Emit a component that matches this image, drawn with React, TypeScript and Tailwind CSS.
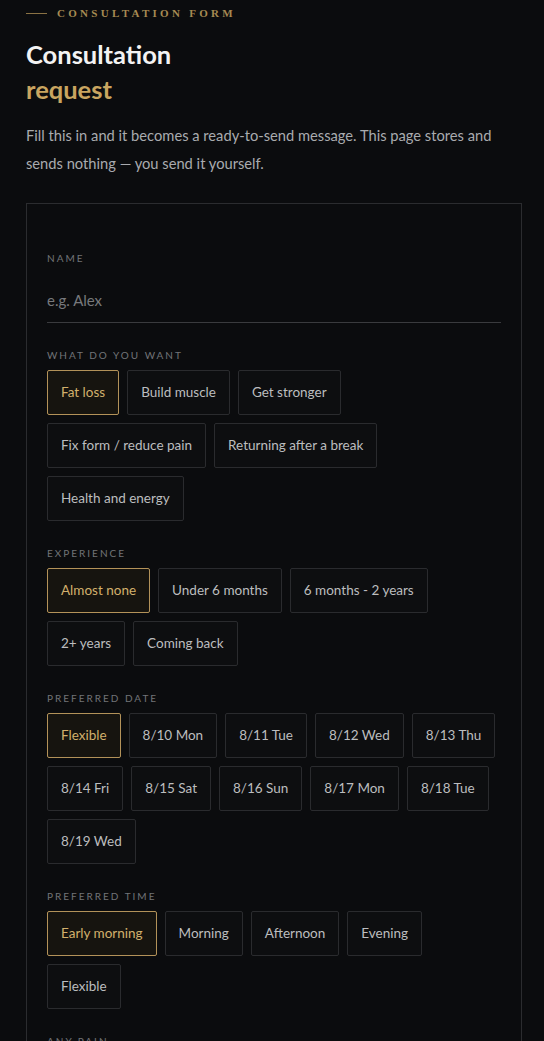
import { useState } from 'react';

const goals = ['Fat loss', 'Build muscle', 'Get stronger', 'Fix form / reduce pain', 'Returning after a break', 'Health and energy'];
const levels = ['Almost none', 'Under 6 months', '6 months - 2 years', '2+ years', 'Coming back'];
const dates = ['Flexible', '8/10 Mon', '8/11 Tue', '8/12 Wed', '8/13 Thu', '8/14 Fri', '8/15 Sat', '8/16 Sun', '8/17 Mon', '8/18 Tue', '8/19 Wed'];
const times = ['Early morning', 'Morning', 'Afternoon', 'Evening', 'Flexible'];

function Label({ children }: { children: string }) {
  return (
    <div className="mb-[9px] h-[12px] text-[10px] leading-[12px] tracking-[0.2em] text-[#727478] uppercase">
      {children}
    </div>
  );
}

function Chips({
  label,
  options,
  value,
  onChange,
}: {
  label: string;
  options: string[];
  value: string;
  onChange: (v: string) => void;
}) {
  return (
    <div className="mt-[26px]">
      <Label>{label}</Label>
      <div className="flex flex-wrap gap-x-[8px] gap-y-[8px]">
        {options.map((opt) => {
          const active = opt === value;
          return (
            <button
              key={opt}
              type="button"
              onClick={() => onChange(opt)}
              className={`h-[45px] rounded-[2px] border px-[13px] text-[13.5px] ${
                active
                  ? 'border-[#b39259] bg-[#16140f] text-[#d2b06c]'
                  : 'border-[#2a2b2e] bg-[#0d0e10] text-[#bcbdbf]'
              }`}
            >
              {opt}
            </button>
          );
        })}
      </div>
    </div>
  );
}

export default function App() {
  const [name, setName] = useState('');
  const [goal, setGoal] = useState('Fat loss');
  const [level, setLevel] = useState('Almost none');
  const [date, setDate] = useState('Flexible');
  const [time, setTime] = useState('Early morning');

  return (
    <div className="min-h-screen bg-[#0b0c0e] pl-[26px] pr-[22px] pt-[5px] font-['Lato',sans-serif] text-[#bcbdbf]">
      <div className="flex items-center gap-[10px]">
        <span className="h-px w-[21px] bg-[#8a7244]" />
        <span className="font-['Liberation_Serif',serif] text-[11px] font-bold leading-[16px] tracking-[0.3em] text-[#a68a52]">
          CONSULTATION FORM
        </span>
      </div>

      <h1 className="mt-[16px] text-[25.5px] font-bold leading-[35px] text-[#f3f3f3]">
        Consultation
        <br />
        <span className="text-[#c9a560]">request</span>
      </h1>

      <p className="mt-[14px] text-[14.7px] leading-[28px] text-[#a9abae]">
        Fill this in and it becomes a ready-to-send message. This page stores and sends nothing — you send it
        yourself.
      </p>

      <div className="mt-[26px] border border-[#2b2c2f] px-[20px] pt-[48px] pb-[40px]">
        <Label>Name</Label>
        <input
          value={name}
          onChange={(e) => setName(e.target.value)}
          placeholder="e.g. Alex"
          className="mt-[4px] h-[46px] w-full border-b border-[#3a3b3e] bg-transparent text-[15px] text-[#e5e5e5] outline-none placeholder:text-[#77797c]"
        />

        <Chips label="What do you want" options={goals} value={goal} onChange={setGoal} />
        <Chips label="Experience" options={levels} value={level} onChange={setLevel} />
        <Chips label="Preferred date" options={dates} value={date} onChange={setDate} />
        <Chips label="Preferred time" options={times} value={time} onChange={setTime} />

        <div className="mt-[26px]">
          <Label>Any pain</Label>
        </div>
      </div>
    </div>
  );
}
